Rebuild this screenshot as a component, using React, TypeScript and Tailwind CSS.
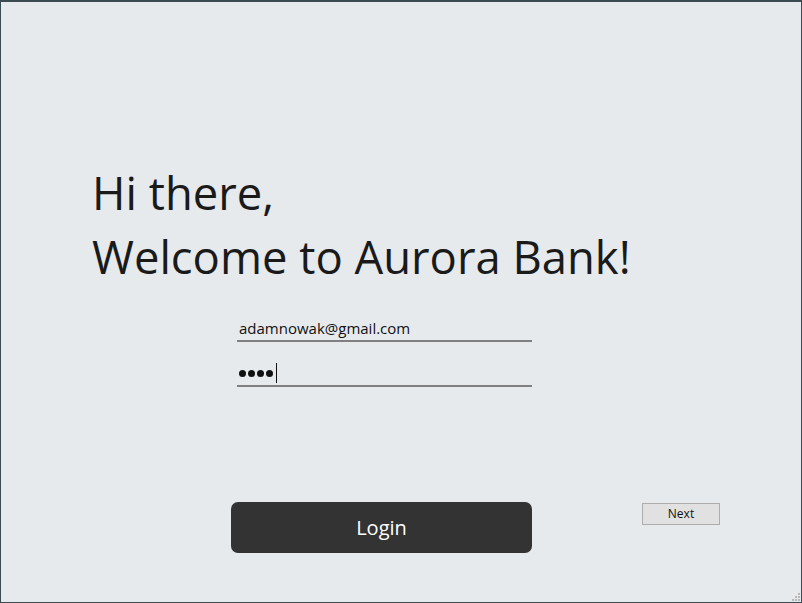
import React from "react";

function App() {
  return (
    <div
      className="w-[802px] h-[603px] bg-[#e6eaed] border-t-2 border-x border-b border-[#3c4a52] flex flex-col relative overflow-hidden"
      style={{ fontFamily: '"Open Sans", "Noto Sans", sans-serif' }}
    >
      {/* Greeting */}
      <div className="pl-[91px] pt-[158px] text-[#1a1a1a] text-[45.4px] leading-[64px] font-normal">
        <div>Hi there,</div>
        <div>Welcome to Aurora Bank!</div>
      </div>

      {/* Form fields */}
      <div className="ml-[236px] mt-[30px] w-[295px] flex flex-col gap-[21px]">
        <div className="h-[24px] border-b-2 border-[#808080] flex items-end">
          <span className="pl-[2px] pb-[2px] text-[15px] leading-[20px] text-[#111]">adamnowak@gmail.com</span>
        </div>
        <div className="h-[24px] border-b-2 border-[#808080] flex items-end">
          <span className="pl-[2px] pb-[2px] flex items-center gap-[2px] text-[#111]">
            <span className="w-[7px] h-[7px] rounded-full bg-[#111]" />
            <span className="w-[7px] h-[7px] rounded-full bg-[#111]" />
            <span className="w-[7px] h-[7px] rounded-full bg-[#111]" />
            <span className="w-[7px] h-[7px] rounded-full bg-[#111]" />
            <span className="w-[1px] h-[20px] bg-[#111] ml-[1px]" />
          </span>
        </div>
      </div>

      {/* Actions */}
      <div className="mt-[115px] ml-[230px] flex items-start">
        <button className="w-[301px] h-[51px] rounded-[7px] bg-[#333333] text-white text-[20px]">
          Login
        </button>
        <button className="ml-[110px] mt-[1px] w-[78px] h-[22px] bg-[#e1e1e1] border border-[#adadad] text-[12px] text-[#111]">
          Next
        </button>
      </div>

      {/* Resize grip */}
      <div className="absolute right-[1px] bottom-[1px] grid grid-cols-3 gap-[1px] w-[8px] h-[8px]">
        <span />
        <span />
        <span className="bg-[#b8b8b8] w-[2px] h-[2px]" />
        <span />
        <span className="bg-[#b8b8b8] w-[2px] h-[2px]" />
        <span className="bg-[#b8b8b8] w-[2px] h-[2px]" />
        <span className="bg-[#b8b8b8] w-[2px] h-[2px]" />
        <span className="bg-[#b8b8b8] w-[2px] h-[2px]" />
        <span className="bg-[#b8b8b8] w-[2px] h-[2px]" />
      </div>
    </div>
  );
}

export default App;
